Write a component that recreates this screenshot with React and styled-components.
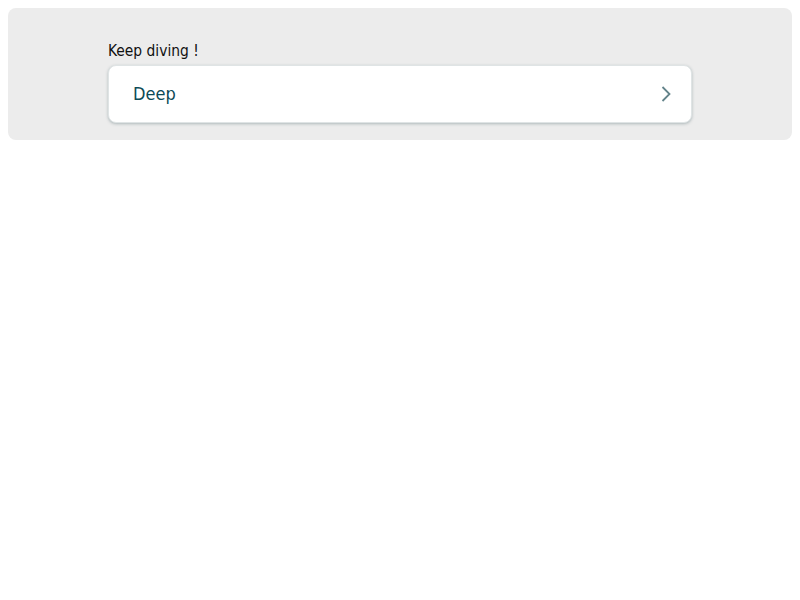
import React from 'react';
import styled, { createGlobalStyle } from 'styled-components';

const GlobalStyle = createGlobalStyle`
    body {
        margin: 8px;
        background: #ffffff;
        font-family: "DejaVu Sans Condensed", "DejaVu Sans", sans-serif;
    }
`

export default function App() {
    return (
        <>
            <GlobalStyle />
            <Panel>
                <Label>Keep diving !</Label>
                <Card>
                    <CardTitle>Deep</CardTitle>
                    <Chevron width="10" height="16" viewBox="0 0 10 16">
                        <path d="M1.5 1 L8.5 8 L1.5 15" fill="none" stroke="#63838a" strokeWidth="1.8" />
                    </Chevron>
                </Card>
            </Panel>
        </>
    )
}

const Panel = styled.div`
    background-color: #ececec;
    border-radius: 8px;
    padding: 32px 100px 17px;
`

const Label = styled.div`
    font-size: 15.4px;
    color: #111;
    line-height: 22px;
    margin-bottom: 3px;
`

const Card = styled.div`
    display: flex;
    align-items: center;
    justify-content: space-between;
    height: 56px;
    padding: 0 20px 0 24px;
    background: #ffffff;
    border-radius: 8px;
    border: 1px solid #dfe4e5;
    box-shadow: 0 1px 3px rgba(60, 90, 95, 0.35);
`

const CardTitle = styled.span`
    font-size: 18px;
    color: #0d4b57;
    margin-top: -2px;
`

const Chevron = styled.svg`
    display: block;
`
